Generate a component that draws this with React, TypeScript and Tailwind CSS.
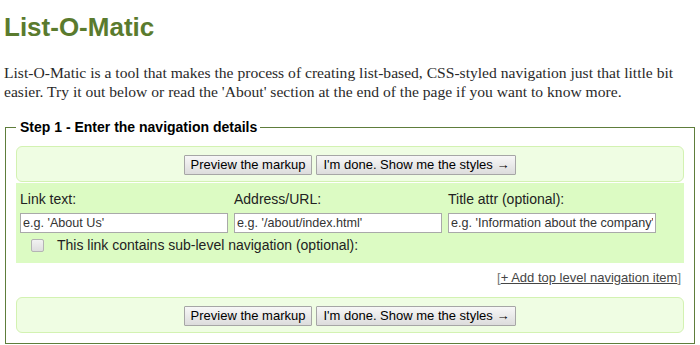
import React from 'react';

function Btn({ children }: { children: React.ReactNode }) {
  return (
    <button className="h-[20px] px-[6px] border border-[#a6a6a6] bg-gradient-to-b from-[#f7f7f7] to-[#dcdcdc] text-[13px] leading-[16px] text-black rounded-[1px]">
      {children}
    </button>
  );
}

function ButtonBar() {
  return (
    <div className="flex justify-center gap-[4px] rounded-[6px] border border-[#d3f2b2] bg-[#effde3] pt-[8px] pb-[6px]">
      <Btn>Preview the markup</Btn>
      <Btn>I'm done. Show me the styles →</Btn>
    </div>
  );
}

const fields = [
  { label: 'Link text:', value: "e.g. 'About Us'" },
  { label: 'Address/URL:', value: "e.g. '/about/index.html'" },
  { label: 'Title attr (optional):', value: "e.g. 'Information about the company'" },
];

export default function App() {
  return (
    <div className="min-h-screen bg-white pl-[4px] font-['Liberation_Sans',Arial,sans-serif] text-[#222]">
      <h1 className="pt-[12px] text-[26px] font-bold leading-[30px] text-[#5a7b2e]">List-O-Matic</h1>
      <p className="mt-[21px] w-[690px] font-['Liberation_Serif','Times_New_Roman',serif] text-[15.6px] leading-[19px] text-[#2a2a2a]">
        List-O-Matic is a tool that makes the process of creating list-based, CSS-styled navigation just that little bit
        easier. Try it out below or read the 'About' section at the end of the page if you want to know more.
      </p>

      <fieldset className="mt-[18px] ml-[1px] mr-[5px] border border-[#5e7d3b] px-[10px] pt-[11px] pb-[10px]">
        <legend className="pl-[4px] pr-[3px] text-[14px] font-bold leading-[16px] text-black">
          Step 1 - Enter the navigation details
        </legend>

        <ButtonBar />

        <div className="mt-[1px] bg-[#dcfbc3] pt-[8px] pb-[10px] pl-[4px]">
          <div className="grid grid-cols-[214px_214px_214px]">
            {fields.map((f) => (
              <div key={f.label}>
                <div className="text-[14px] leading-[16px] text-[#222]">{f.label}</div>
                <input
                  readOnly
                  value={f.value}
                  className="mt-[6px] block h-[20px] w-[208px] border border-[#a9a9a9] bg-white px-[2px] text-[12.6px] text-[#333] outline-none"
                />
              </div>
            ))}
          </div>
          <div className="mt-[4px] flex items-center">
            <span className="ml-[11px] inline-block h-[13px] w-[13px] rounded-[2px] border border-[#b4b4b4] bg-gradient-to-b from-[#f2f2f2] to-[#dedede]" />
            <span className="ml-[13px] text-[14px] leading-[16px] text-[#222]">
              This link contains sub-level navigation (optional):
            </span>
          </div>
        </div>

        <div className="mt-[7px] pr-[3px] text-right text-[13px] leading-[15px] text-[#777]">
          [<a href="#" className="text-[#454545] underline">+ Add top level navigation item</a>]
        </div>

        <div className="mt-[12px]">
          <ButtonBar />
        </div>
      </fieldset>
    </div>
  );
}
